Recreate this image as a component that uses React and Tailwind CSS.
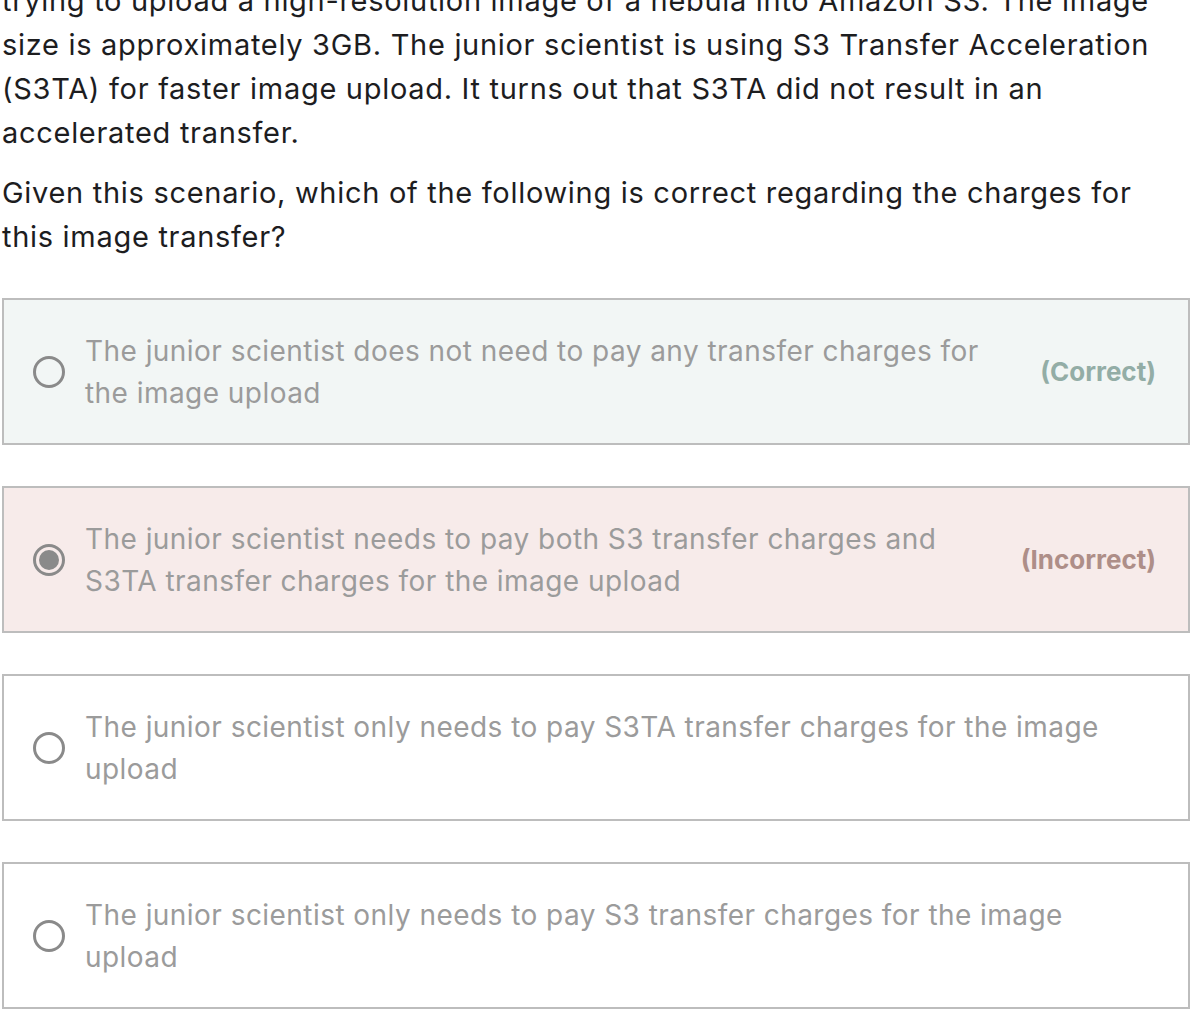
import React from "react";

const options = [
  {
    lines: ["The junior scientist does not need to pay any transfer charges for", "the image upload"],
    status: "correct",
    checked: false,
  },
  {
    lines: ["The junior scientist needs to pay both S3 transfer charges and", "S3TA transfer charges for the image upload"],
    status: "incorrect",
    checked: true,
  },
  {
    lines: ["The junior scientist only needs to pay S3TA transfer charges for the image", "upload"],
    status: null,
    checked: false,
  },
  {
    lines: ["The junior scientist only needs to pay S3 transfer charges for the image", "upload"],
    status: null,
    checked: false,
  },
];

const Radio = ({ checked }) => (
  <div className="w-[32px] h-[32px] shrink-0 rounded-full border-[3px] border-[#8a8a8a] flex items-center justify-center">
    {checked && <div className="w-[20px] h-[20px] rounded-full bg-[#8a8a8a]" />}
  </div>
);

const Option = ({ lines, status, checked }) => {
  // box colours depend on the answer state
  const box =
    status === "correct"
      ? "bg-[#f2f6f5]"
      : status === "incorrect"
      ? "bg-[#f7ebea]"
      : "bg-white";

  return (
    <div
      className={`flex items-center h-[147px] border-2 border-[#bdbdbd] pl-[29px] pr-[32px] ${box}`}
    >
      <Radio checked={checked} />
      <p className="flex-1 min-w-0 ml-[20px] whitespace-nowrap text-[28px] leading-[42px] tracking-[0.45px] text-[#9b9b9b]">
        {lines[0]}
        <br />
        {lines[1]}
      </p>
      {status === "correct" && (
        <span className="shrink-0 pl-10 text-[26px] font-bold text-[#93ada6]">
          (Correct)
        </span>
      )}
      {status === "incorrect" && (
        <span className="shrink-0 pl-10 text-[26px] font-bold text-[#ae8e88]">
          (Incorrect)
        </span>
      )}
    </div>
  );
};

export default function App() {
  return (
    <div
      className="w-[1204px] h-[1018px] overflow-hidden bg-white"
      style={{ fontFamily: "Inter, 'Noto Sans', sans-serif" }}
    >
      <div className="mt-[-21px] pl-[2px] w-[1190px]">
        <div className="text-[29px] leading-[44px] tracking-[0.7px] text-[#1d1d1f] whitespace-nowrap">
          <p>
            trying to upload a high-resolution image of a nebula into Amazon S3. The image
            <br />
            size is approximately 3GB. The junior scientist is using S3 Transfer Acceleration
            <br />
            (S3TA) for faster image upload. It turns out that S3TA did not result in an
            <br />
            accelerated transfer.
          </p>
          <p className="mt-4">
            Given this scenario, which of the following is correct regarding the charges for
            <br />
            this image transfer?
          </p>
        </div>

        <div className="mt-[39px] flex flex-col gap-[41px]">
          {options.map((o, i) => (
            <Option key={i} {...o} />
          ))}
        </div>
      </div>
    </div>
  );
}
